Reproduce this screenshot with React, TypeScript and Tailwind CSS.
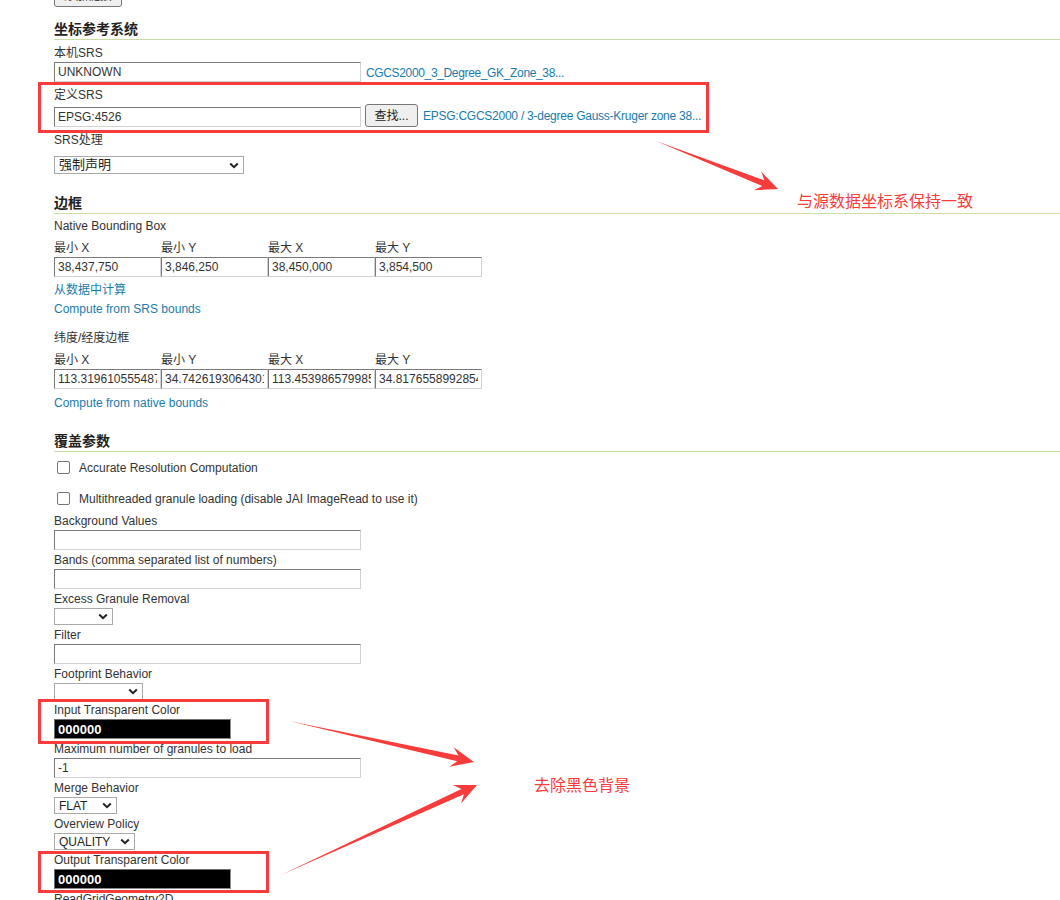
import React from "react";

const RED = "#f83b3b";

function Label({ children, className = "" }: { children: React.ReactNode; className?: string }) {
  return <div className={`h-[19px] whitespace-nowrap leading-[21px] ${className}`}>{children}</div>;
}

function LinkText({ children, className = "" }: { children: React.ReactNode; className?: string }) {
  return <div className={`h-[19px] whitespace-nowrap leading-[21px] text-[#1a7cad] ${className}`}>{children}</div>;
}

function Heading({ children, className = "" }: { children: React.ReactNode; className?: string }) {
  return (
    <div className={`border-b border-[#c9dca6] text-[14px] font-bold leading-[20px] text-[#222] ${className}`}>
      {children}
    </div>
  );
}

function Field({ value = "", className = "" }: { value?: string; className?: string }) {
  return (
    <input
      readOnly
      value={value}
      className={`block h-[20px] shrink-0 border border-t-[#7a7a7a] border-l-[#7a7a7a] border-r-[#d2d2d2] border-b-[#d2d2d2] bg-white px-[3px] text-[12px] text-[#333] outline-none ${className}`}
    />
  );
}

function DarkField({ value }: { value: string }) {
  return (
    <input
      readOnly
      value={value}
      className="block h-[20px] w-[177px] border border-t-[#6f6f6f] border-l-[#6f6f6f] border-r-[#8a8a8a] border-b-[#8a8a8a] bg-black px-[3px] text-[13px] font-semibold text-white outline-none"
    />
  );
}

function Chevron() {
  return (
    <svg width="10" height="7" viewBox="0 0 10 7" className="shrink-0">
      <path d="M1.2 1.5 L5 5.2 L8.8 1.5" fill="none" stroke="#222" strokeWidth="2" />
    </svg>
  );
}

function Select({ value = "", className = "" }: { value?: string; className?: string }) {
  return (
    <div
      className={`flex items-center justify-between border border-[#a9a9a9] bg-white pl-[4px] pr-[4px] text-[#222] ${className}`}
    >
      <span className="whitespace-nowrap">{value}</span>
      <Chevron />
    </div>
  );
}

function Checkbox({ label, className = "" }: { label: string; className?: string }) {
  return (
    <div className={`flex h-[19px] items-center ${className}`}>
      <div className="ml-[3px] mr-[9px] h-[13px] w-[13px] rounded-[2px] border border-[#767676] bg-white" />
      <span className="mt-[1px] whitespace-nowrap">{label}</span>
    </div>
  );
}

function BoxRow({ labels, values, className = "" }: { labels: string[]; values: string[]; className?: string }) {
  return (
    <div className={className}>
      <div className="flex">
        {labels.map((l) => (
          <Label key={l} className="w-[107px]">
            {l}
          </Label>
        ))}
      </div>
      <div className="flex">
        {values.map((v, i) => (
          <Field key={i} value={v} className="w-[107px]" />
        ))}
      </div>
    </div>
  );
}

function arrowPoints(tx: number, ty: number, hx: number, hy: number, headLen: number, headW: number, shaftW: number) {
  const dx = hx - tx;
  const dy = hy - ty;
  const L = Math.hypot(dx, dy);
  const ux = dx / L;
  const uy = dy / L;
  const nx = -uy;
  const ny = ux;
  const jx = hx - ux * headLen * 0.72;
  const jy = hy - uy * headLen * 0.72;
  const bx = hx - ux * headLen;
  const by = hy - uy * headLen;
  const pts = [
    [tx, ty],
    [jx + nx * shaftW, jy + ny * shaftW],
    [bx + nx * headW, by + ny * headW],
    [hx, hy],
    [bx - nx * headW, by - ny * headW],
    [jx - nx * shaftW, jy - ny * shaftW],
  ];
  return pts.map((p) => `${p[0].toFixed(1)},${p[1].toFixed(1)}`).join(" ");
}

const labelsXY = ["最小 X", "最小 Y", "最大 X", "最大 Y"];

export default function App() {
  return (
    <div className="relative h-[900px] w-[1060px] overflow-hidden bg-white font-['Liberation_Sans','Noto_Sans_CJK_SC',sans-serif] text-[12px] text-[#333]">
      <div className="pl-[54px]">
        <button className="-mt-[16px] block h-[23px] w-[68px] rounded-[3px] border border-[#767676] bg-[#efefef] text-[12px] leading-none text-[#222]">
          添加链接
        </button>

        <Heading className="mt-[12px]">坐标参考系统</Heading>
        <Label className="mt-[3px]">本机SRS</Label>
        <div className="flex items-center">
          <Field value="UNKNOWN" className="w-[307px]" />
          <span className="ml-[5px] mt-[1px] whitespace-nowrap tracking-[-0.35px] text-[#1a7cad]">
            CGCS2000_3_Degree_GK_Zone_38...
          </span>
        </div>
        <Label className="mt-[3px]">定义SRS</Label>
        <div className="flex h-[23px] items-start">
          <Field value="EPSG:4526" className="mt-[3px] w-[307px]" />
          <button className="ml-[4px] h-[23px] w-[53px] rounded-[3px] border border-[#767676] bg-[#efefef] text-[12px] leading-none text-[#222]">
            查找...
          </button>
          <span className="ml-[5px] mt-[1px] self-center whitespace-nowrap tracking-[-0.25px] text-[#1a7cad]">
            EPSG:CGCS2000 / 3-degree Gauss-Kruger zone 38...
          </span>
        </div>
        <Label className="mt-[3px]">SRS处理</Label>
        <Select value="强制声明" className="mt-[7px] h-[18px] w-[190px] text-[13px]" />

        <Heading className="mt-[19px]">边框</Heading>
        <Label className="mt-[2px]">Native Bounding Box</Label>
        <BoxRow
          className="mt-[3px]"
          labels={labelsXY}
          values={["38,437,750", "3,846,250", "38,450,000", "3,854,500"]}
        />
        <LinkText className="mt-[3px]">从数据中计算</LinkText>
        <LinkText>Compute from SRS bounds</LinkText>
        <Label className="mt-[10px]">纬度/经度边框</Label>
        <BoxRow
          className="mt-[3px]"
          labels={labelsXY}
          values={["113.31961055548712", "34.74261930643017", "113.45398657998512", "34.817655899285406"]}
        />
        <LinkText className="mt-[4px]">Compute from native bounds</LinkText>

        <Heading className="mt-[19px]">覆盖参数</Heading>
        <Checkbox className="mt-[6px]" label="Accurate Resolution Computation" />
        <Checkbox className="mt-[12px]" label="Multithreaded granule loading (disable JAI ImageRead to use it)" />
        <Label className="mt-[3px]">Background Values</Label>
        <Field className="w-[307px]" />
        <Label>Bands (comma separated list of numbers)</Label>
        <Field className="w-[307px]" />
        <Label>Excess Granule Removal</Label>
        <Select className="h-[17px] w-[59px] text-[12px]" />
        <Label>Filter</Label>
        <Field className="w-[307px]" />
        <Label>Footprint Behavior</Label>
        <Select className="h-[17px] w-[89px] text-[12px]" />
        <Label>Input Transparent Color</Label>
        <DarkField value="000000" />
        <Label>Maximum number of granules to load</Label>
        <Field value="-1" className="w-[307px]" />
        <Label>Merge Behavior</Label>
        <Select value="FLAT" className="h-[17px] w-[63px] text-[12px]" />
        <Label>Overview Policy</Label>
        <Select value="QUALITY" className="h-[17px] w-[81px] text-[12px]" />
        <Label>Output Transparent Color</Label>
        <DarkField value="000000" />
        <Label>ReadGridGeometry2D</Label>
      </div>

      {/* annotation overlay */}
      <div className="pointer-events-none absolute left-[38px] top-[82px] h-[51px] w-[671px] border-[3px] border-[#f83b3b]" />
      <div className="pointer-events-none absolute left-[38px] top-[699px] h-[45px] w-[231px] border-[3px] border-[#f83b3b]" />
      <div className="pointer-events-none absolute left-[38px] top-[851px] h-[42px] w-[231px] border-[3px] border-[#f83b3b]" />

      <svg className="pointer-events-none absolute left-0 top-0" width="1060" height="900" viewBox="0 0 1060 900">
        <polygon points={arrowPoints(656, 141, 778, 189, 22, 10, 3)} fill={RED} />
        <polygon points={arrowPoints(289, 721, 474, 762, 23, 10, 3)} fill={RED} />
        <polygon points={arrowPoints(281, 875, 477, 785, 22, 10, 3)} fill={RED} />
      </svg>

      <div className="absolute left-[797px] top-[191px] whitespace-nowrap font-['Noto_Sans_CJK_SC',sans-serif] text-[16px] leading-[18px] text-[#f83b3b]">
        与源数据坐标系保持一致
      </div>
      <div className="absolute left-[534px] top-[775px] whitespace-nowrap font-['Noto_Sans_CJK_SC',sans-serif] text-[16px] leading-[18px] text-[#f83b3b]">
        去除黑色背景
      </div>
    </div>
  );
}
